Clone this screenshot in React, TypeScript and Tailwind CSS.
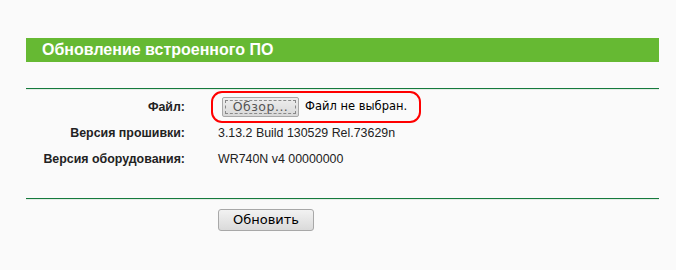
export default function App() {
  return (
    <div className="w-[676px] h-[270px] bg-[#fafafa] pt-[38px]" style={{ fontFamily: '"Liberation Sans", Arial, sans-serif' }}>
      <div className="ml-[26px] w-[633px]">
        <div className="h-[24px] bg-[#66b933] flex items-center pl-[16px]">
          <span className="text-white font-bold text-[16px] leading-none">Обновление встроенного ПО</span>
        </div>
        <div className="mt-[26px] h-px bg-[#157a3c]"></div>
        <div className="h-px bg-[#e4ece6]"></div>
        <div className="grid grid-cols-[159px_1fr] gap-x-[33px] items-center text-[12.4px] text-[#222]">
          <div className="h-[34px] flex items-center justify-end font-bold">Файл:</div>
          <div className="h-[34px] flex items-center">
            <div className="-ml-[7px] border-2 border-[#ff0000] rounded-[11px] w-[210px] h-[32px] flex items-center pl-[9px]">
              <button className="w-[77px] h-[20px] border border-[#a8a8a8] rounded-[2px] bg-gradient-to-b from-[#eeeeee] to-[#d8d8d8] flex items-center justify-center p-[2px]">
                <span className="w-full h-full border border-dashed border-[#888] flex items-center justify-center text-[#555] tracking-[0.5px]" style={{ fontFamily: '"DejaVu Sans", sans-serif', fontSize: '12.5px' }}>Обзор...</span>
              </button>
              <span className="ml-[6px] text-black" style={{ fontFamily: '"DejaVu Sans", sans-serif', fontSize: '11.5px' }}>Файл не выбран.</span>
            </div>
          </div>
          <div className="h-[18px] flex items-center justify-end font-bold">Версия прошивки:</div>
          <div className="h-[18px] flex items-center">3.13.2 Build 130529 Rel.73629n</div>
          <div className="h-[34px] flex items-center justify-end font-bold">Версия оборудования:</div>
          <div className="h-[34px] flex items-center">WR740N v4 00000000</div>
        </div>
        <div className="mt-[22px] h-px bg-[#157a3c]"></div>
        <div className="h-px bg-[#e4ece6]"></div>
        <div className="pl-[192px] pt-[7px]">
          <button className="w-[96px] h-[22px] border border-[#a8a8a8] rounded-[3px] bg-gradient-to-b from-[#f2f2f2] to-[#dadada] text-[13px] text-black" style={{ fontFamily: '"DejaVu Sans", sans-serif' }}>Обновить</button>
        </div>
      </div>
    </div>
  );
}
